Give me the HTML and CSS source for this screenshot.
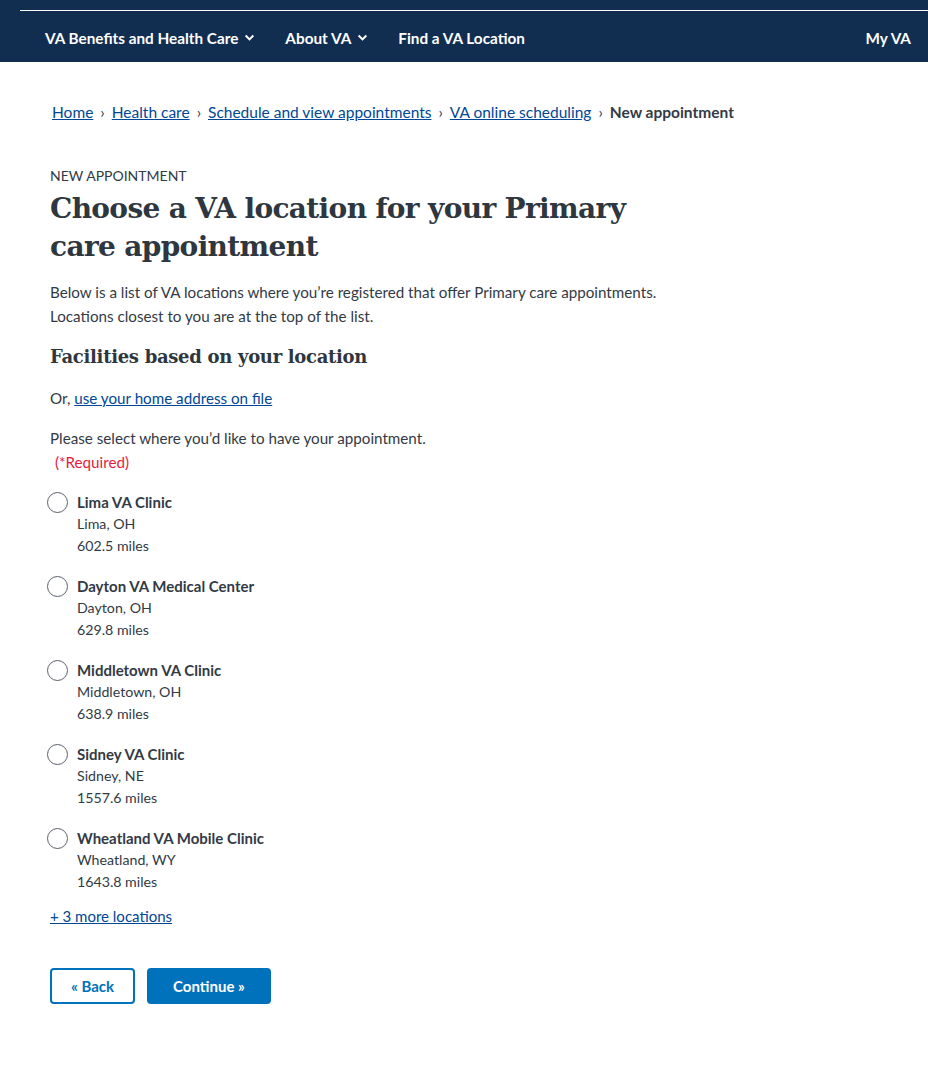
FILE: index.html
```html
<!DOCTYPE html>
<html lang="en">
<head>
<meta charset="utf-8">
<title>New appointment</title>
<link rel="stylesheet" href="styles.css">
</head>
<body>
<header class="header">
  <div class="header-line"></div>
  <nav class="nav">
    <ul class="nav-list">
      <li class="nav-item">VA Benefits and Health Care <svg class="chev" viewBox="0 0 10 10" width="11" height="11"><path d="M1.5 3.2 L5 6.7 L8.5 3.2" fill="none" stroke="#fff" stroke-width="1.8"/></svg></li>
      <li class="nav-item">About VA <svg class="chev" viewBox="0 0 10 10" width="11" height="11"><path d="M1.5 3.2 L5 6.7 L8.5 3.2" fill="none" stroke="#fff" stroke-width="1.8"/></svg></li>
      <li class="nav-item">Find a VA Location</li>
    </ul>
    <div class="nav-item myva">My VA</div>
  </nav>
</header>
<main class="main">
  <ol class="breadcrumbs">
    <li><a href="#">Home</a></li>
    <li class="sep">›</li>
    <li><a href="#">Health care</a></li>
    <li class="sep">›</li>
    <li><a href="#">Schedule and view appointments</a></li>
    <li class="sep">›</li>
    <li><a href="#">VA online scheduling</a></li>
    <li class="sep">›</li>
    <li class="current">New appointment</li>
  </ol>
  <div class="content">
    <div class="eyebrow">NEW APPOINTMENT</div>
    <h1 class="title">Choose a VA location for your Primary care appointment</h1>
    <p class="intro">Below is a list of VA locations where you’re registered that offer Primary care appointments. Locations closest to you are at the top of the list.</p>
    <h2 class="subtitle">Facilities based on your location</h2>
    <p class="or">Or, <a href="#">use your home address on file</a></p>
    <fieldset class="fieldset">
      <legend class="legend">Please select where you’d like to have your appointment.<span class="required">(*Required)</span></legend>
      <label class="option"><span class="radio"></span><span class="opt-text"><strong>Lima VA Clinic</strong><span>Lima, OH</span><span>602.5 miles</span></span></label>
      <label class="option"><span class="radio"></span><span class="opt-text"><strong>Dayton VA Medical Center</strong><span>Dayton, OH</span><span>629.8 miles</span></span></label>
      <label class="option"><span class="radio"></span><span class="opt-text"><strong>Middletown VA Clinic</strong><span>Middletown, OH</span><span>638.9 miles</span></span></label>
      <label class="option"><span class="radio"></span><span class="opt-text"><strong>Sidney VA Clinic</strong><span>Sidney, NE</span><span>1557.6 miles</span></span></label>
      <label class="option"><span class="radio"></span><span class="opt-text"><strong>Wheatland VA Mobile Clinic</strong><span>Wheatland, WY</span><span>1643.8 miles</span></span></label>
    </fieldset>
    <a href="#" class="more">+ 3 more locations</a>
    <div class="buttons">
      <button class="btn btn-outline">« Back</button>
      <button class="btn btn-primary">Continue »</button>
    </div>
  </div>
</main>
</body>
</html>
```
FILE: styles.css
```css
* { box-sizing: border-box; }
body {
  margin: 0;
  font-family: "Lato", "Liberation Sans", sans-serif;
  color: #323a45;
  background: #fff;
}
.header {
  background: #112e51;
  height: 62px;
  padding-top: 10px;
}
.header-line {
  margin-left: 20px;
  height: 1px;
  background: #fff;
}
.nav {
  display: flex;
  justify-content: space-between;
  align-items: center;
  height: 53px;
  padding: 0 17px 0 45px;
}
.nav-list {
  display: flex;
  list-style: none;
  margin: 0;
  padding: 0;
  gap: 30px;
}
.nav-item {
  color: #fff;
  font-weight: 700;
  font-size: 15.3px;
  display: flex;
  align-items: center;
  gap: 6px;
}
.main {
  padding: 0 50px;
}
.breadcrumbs {
  list-style: none;
  margin: 0;
  padding: 40px 0 0 2px;
  display: flex;
  gap: 7px;
  font-size: 15.5px;
  line-height: 20px;
}
.breadcrumbs a { color: #004795; }
.breadcrumbs .sep { color: #323a45; }
.breadcrumbs .current { font-weight: 700; }
.content { padding-top: 45px; max-width: 620px; }
.eyebrow {
  font-size: 14px;
  line-height: 18px;
}
.title {
  font-family: "DejaVu Serif", serif;
  font-weight: 700;
  font-size: 28px;
  line-height: 38px;
  margin: 5px 0 14px;
  letter-spacing: -0.65px;
  color: #2e3640;
}
.intro {
  font-size: 15.2px;
  line-height: 24px;
  margin: 0 0 15px;
}
.subtitle {
  font-family: "DejaVu Serif", serif;
  font-weight: 700;
  font-size: 18px;
  line-height: 28px;
  margin: 0 0 15px;
  letter-spacing: -0.3px;
  color: #2e3640;
}
.or { font-size: 15.2px; line-height: 24px; margin: 0 0 16px; }
.or a, .more { color: #004795; }
.fieldset { border: 0; margin: 0; padding: 0; }
.legend {
  font-size: 15.2px;
  line-height: 24px;
  padding: 0;
}
.required {
  display: block;
  color: #e31c3d;
  padding-left: 5px;
}
.option {
  display: flex;
  gap: 9px;
  margin-top: 18px;
  margin-left: -3px;
  font-size: 14.2px;
  line-height: 22px;
}
.fieldset .option:first-of-type { margin-top: 17px; }
.radio {
  width: 21px;
  height: 21px;
  border-radius: 50%;
  border: 1.5px solid #5b616b;
  flex: none;
  margin-top: 1px;
  background: #fff;
}
.opt-text { display: flex; flex-direction: column; }
.opt-text strong { font-size: 15px; }
.more {
  display: inline-block;
  margin-top: 13px;
  font-size: 15px;
  line-height: 20px;
}
.buttons {
  display: flex;
  gap: 12px;
  margin-top: 42px;
}
.btn {
  font-family: inherit;
  font-weight: 700;
  font-size: 15px;
  height: 36px;
  border-radius: 4px;
  cursor: pointer;
}
.btn-outline {
  background: #fff;
  border: 2px solid #0071bb;
  color: #0071bb;
  width: 85px;
}
.btn-primary {
  background: #0071bb;
  border: 0;
  color: #fff;
  width: 124px;
}
```
